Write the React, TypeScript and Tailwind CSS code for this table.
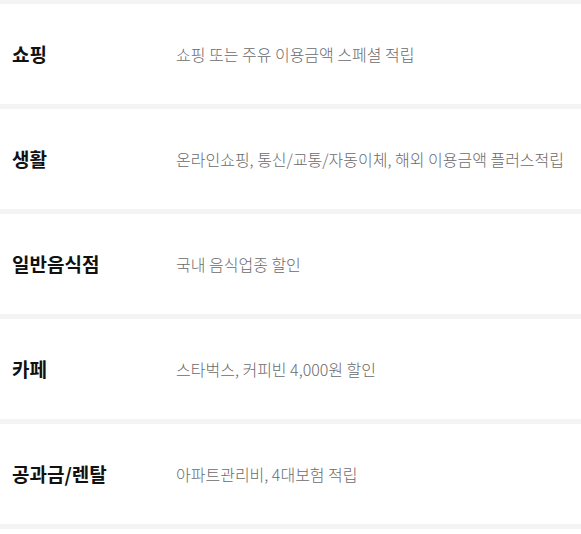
import React from 'react';

const rows = [
    { title: '쇼핑', desc: '쇼핑 또는 주유 이용금액 스페셜 적립' },
    { title: '생활', desc: '온라인쇼핑, 통신/교통/자동이체, 해외 이용금액 플러스적립' },
    { title: '일반음식점', desc: '국내 음식업종 할인' },
    { title: '카페', desc: '스타벅스, 커피빈 4,000원 할인' },
    { title: '공과금/렌탈', desc: '아파트관리비, 4대보험 적립' },
];

const App: React.FC = () => {
    return (
        <div className="w-[581px] bg-white font-['Noto_Sans_CJK_KR','Noto_Sans',sans-serif]">
            <div className="h-[4px] bg-[#f4f4f4]" />
            {rows.map((row) => (
                <div key={row.title}>
                    <div className="h-[100px] flex items-center">
                        <div className="w-[176px] pl-[12px] text-[19px] font-bold text-[#111]">{row.title}</div>
                        <div className="text-[16px] font-light text-[#6b6b6b]">{row.desc}</div>
                    </div>
                    <div className="h-[5px] bg-[#f4f4f4]" />
                </div>
            ))}
        </div>
    );
};

export default App;
